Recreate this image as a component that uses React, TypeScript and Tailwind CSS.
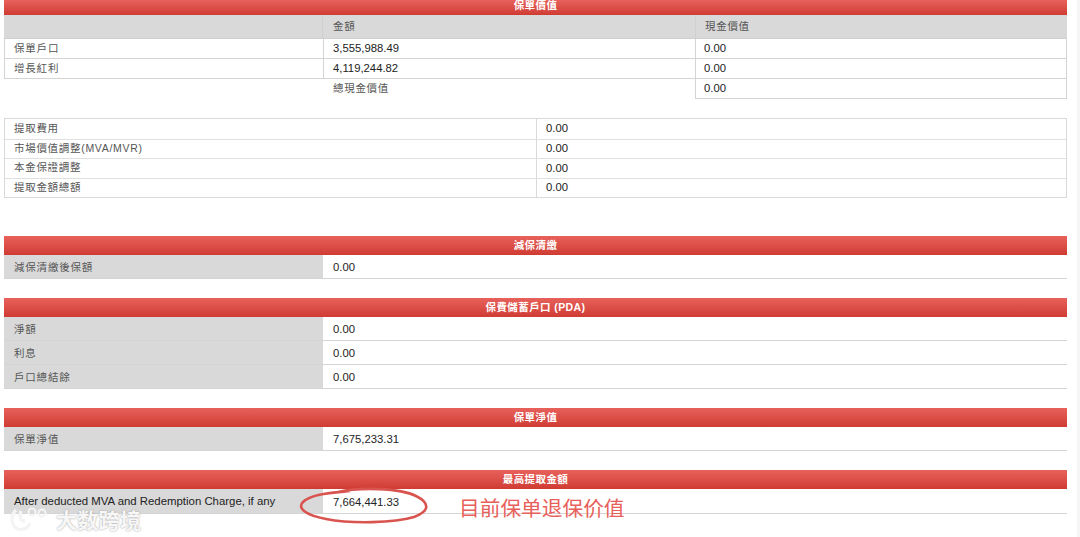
const FONT = "font-['Liberation_Sans','Noto_Sans_CJK_TC',sans-serif]";

function RedBar({ title, className = "h-[19px]" }: { title: string; className?: string }) {
  return (
    <div
      className={`${className} flex items-center justify-center bg-gradient-to-b from-[#e8615b] to-[#cf3b33] text-white text-[10.5px] font-bold tracking-[0.4px]`}
    >
      {title}
    </div>
  );
}

function GridRow({ label, value }: { label: string; value: string }) {
  return (
    <div className="flex h-[24px] border-b border-[#d4d4d4]">
      <div className="w-[319px] shrink-0 bg-[#d9d9d9] pl-[10px] pt-[2px] flex items-center text-[#555] text-[10.5px] tracking-[0.8px]">
        {label}
      </div>
      <div className="flex-1 pl-[10px] pt-[2px] flex items-center text-[#222] text-[11.3px] bg-white">{value}</div>
    </div>
  );
}

const ACCOUNT_ROWS = [
  ["保單戶口", "3,555,988.49", "0.00"],
  ["增長紅利", "4,119,244.82", "0.00"],
];

const WITHDRAW_ROWS = [
  ["提取費用", "0.00"],
  ["市場價值調整(MVA/MVR)", "0.00"],
  ["本金保證調整", "0.00"],
  ["提取金額總額", "0.00"],
];

const PDA_ROWS = [
  ["淨額", "0.00"],
  ["利息", "0.00"],
  ["戶口總結餘", "0.00"],
];

export default function App() {
  return (
    <div className={`relative w-[1080px] h-[537px] overflow-hidden bg-white border-r-[3px] border-[#f6f6f6] ${FONT}`}>
      <div className="w-[1063px] ml-[4px]">
        <RedBar title="保單價值" className="h-[15px] pb-[4px]" />
        <div className="flex h-[24px] bg-[#d9d9d9] border-b border-[#cfcfcf] text-[#555] text-[10.5px] tracking-[0.7px]">
          <div className="w-[319px] border-r border-[#cfcfcf]" />
          <div className="w-[372px] pl-[10px] flex items-center">金額</div>
          <div className="flex-1 pl-[9px] flex items-center border-l border-[#cfcfcf]">現金價值</div>
        </div>
        {ACCOUNT_ROWS.map(([label, amount, cash]) => (
          <div key={label} className="flex h-[20px] border-b border-[#d4d4d4] border-l border-l-[#d4d4d4] border-r border-r-[#d4d4d4]">
            <div className="w-[318px] pl-[9px] flex items-center text-[#555] text-[10.5px] tracking-[0.8px]">{label}</div>
            <div className="w-[372px] pl-[9px] flex items-center border-l border-[#d4d4d4] text-[#222] text-[11.3px]">{amount}</div>
            <div className="flex-1 pl-[8px] flex items-center border-l border-[#d4d4d4] text-[#222] text-[11.3px]">{cash}</div>
          </div>
        ))}
        <div className="flex h-[20px]">
          <div className="w-[319px]" />
          <div className="w-[372px] pl-[10px] flex items-center text-[#555] text-[10.5px] tracking-[0.7px]">總現金價值</div>
          <div className="flex-1 pl-[8px] flex items-center border-l border-b border-r border-[#d4d4d4] text-[#222] text-[11.3px]">0.00</div>
        </div>

        <div className="mt-[19px] border border-[#d9d9d9] flex flex-col">
          {WITHDRAW_ROWS.map(([label, value], i) => (
            <div key={label} className={`flex h-[19.5px] ${i > 0 ? "border-t border-[#e0e0e0]" : ""}`}>
              <div className="w-[531px] pl-[9px] flex items-center text-[#555] text-[10.5px] tracking-[0.7px]">{label}</div>
              <div className="flex-1 pl-[9px] flex items-center border-l border-[#d9d9d9] text-[#222] text-[11.3px]">{value}</div>
            </div>
          ))}
        </div>

        <div className="mt-[38px]">
          <RedBar title="減保清繳" />
          <GridRow label="減保清繳後保額" value="0.00" />
        </div>

        <div className="mt-[19px]">
          <RedBar title="保費儲蓄戶口 (PDA)" />
          {PDA_ROWS.map(([label, value]) => (
            <GridRow key={label} label={label} value={value} />
          ))}
        </div>

        <div className="mt-[19px]">
          <RedBar title="保單淨值" />
          <GridRow label="保單淨值" value="7,675,233.31" />
        </div>

        <div className="mt-[19px]">
          <RedBar title="最高提取金額" />
          <div className="flex h-[25px] border-b border-[#d4d4d4]">
            <div className="w-[319px] shrink-0 bg-[#d9d9d9] pl-[10px] pt-[2px] flex items-center text-[#222] text-[11.4px]">
              After deducted MVA and Redemption Charge, if any
            </div>
            <div className="flex-1 pl-[10px] pt-[2px] flex items-center text-[#222] text-[11.3px] bg-white">7,664,441.33</div>
          </div>
        </div>
      </div>

      {/* hand-drawn annotation */}
      <svg className="absolute left-[296px] top-[487px]" width="136" height="38" viewBox="0 0 136 38" fill="none">
        <path
          d="M42 5C64 0 104 1 120 9C134 16 134 24 118 30C98 36 56 37 30 32C9 28 1 21 7 15C15 7 34 6 54 4"
          stroke="#d9544f"
          strokeWidth="2.6"
        />
      </svg>
      <div className="absolute left-[459px] top-[493px] text-[#e8605a] text-[20.7px] leading-[28px] font-['Noto_Sans_CJK_SC',sans-serif]">
        目前保单退保价值
      </div>

      {/* watermark */}
      <div className="absolute left-[9px] top-[506px] flex items-center gap-[8px]">
        <svg width="39" height="24" viewBox="0 0 39 24" fill="none" stroke="#f4f4f4" strokeWidth="3.4">
          <path d="M7 3C1 9 2 19 9 22C14 24 19 21 21 16" />
          <path d="M12 4C10 9 11 14 16 14" />
          <circle cx="23" cy="5" r="3.5" strokeWidth="2" />
          <circle cx="33" cy="6" r="3.5" strokeWidth="2" />
        </svg>
        <span className="text-[21px] leading-[26px] tracking-[0.3px] font-bold text-[#f7f7f7] [text-shadow:0_0_2px_#999] font-['Noto_Sans_CJK_SC',sans-serif]">
          大数跨境
        </span>
      </div>
    </div>
  );
}
